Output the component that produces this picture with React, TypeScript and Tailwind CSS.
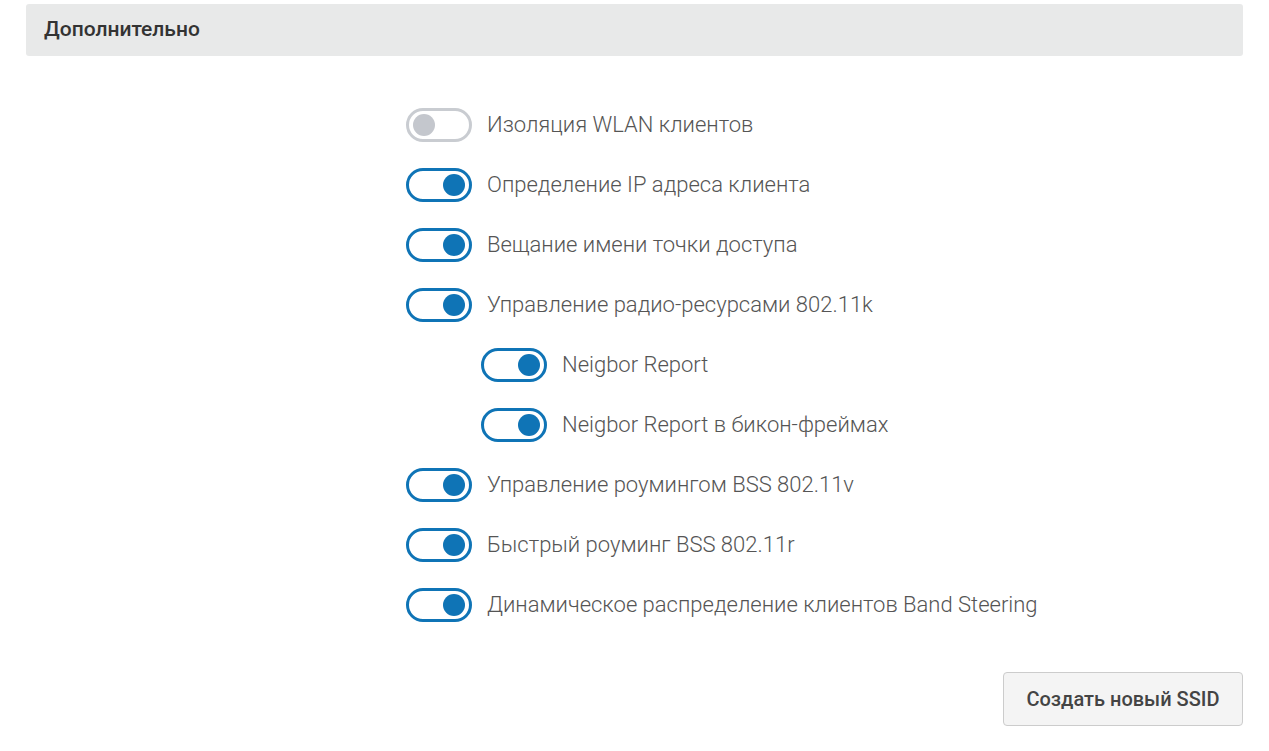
import React, { useState } from 'react';

type Option = {
  id: string;
  label: string;
  nested?: boolean;
  on: boolean;
};

const initialOptions: Option[] = [
  { id: 'isolation', label: 'Изоляция WLAN клиентов', on: false },
  { id: 'ip', label: 'Определение IP адреса клиента', on: true },
  { id: 'broadcast', label: 'Вещание имени точки доступа', on: true },
  { id: 'rrm', label: 'Управление радио-ресурсами 802.11k', on: true },
  { id: 'neighbor', label: 'Neigbor Report', nested: true, on: true },
  { id: 'beacon', label: 'Neigbor Report в бикон-фреймах', nested: true, on: true },
  { id: 'bss', label: 'Управление роумингом BSS 802.11v', on: true },
  { id: 'fast', label: 'Быстрый роуминг BSS 802.11r', on: true },
  { id: 'band', label: 'Динамическое распределение клиентов Band Steering', on: true },
];

const Toggle: React.FC<{ on: boolean; onClick: () => void }> = ({ on, onClick }) => (
  <button
    onClick={onClick}
    className={`flex items-center w-[66px] h-[34px] rounded-full border-[3px] px-[4px] bg-white shrink-0 ${
      on ? 'border-[#0f74b6] justify-end' : 'border-[#c9ccd1] justify-start'
    }`}
  >
    <span className={`block w-[22px] h-[22px] rounded-full ${on ? 'bg-[#0f74b6]' : 'bg-[#c4c7cd]'}`} />
  </button>
);

const App: React.FC = () => {
  const [options, setOptions] = useState(initialOptions);

  const toggle = (id: string) => {
    setOptions((prev) => prev.map((o) => (o.id === id ? { ...o, on: !o.on } : o)));
  };

  return (
    <div className="min-h-screen bg-white font-['Roboto',sans-serif] pt-[4px] px-[26px]">
      {/* Section header */}
      <div className="h-[52px] bg-[#e8e9e9] rounded-[3px] flex items-center px-[18px]">
        <h2 className="text-[21px] font-medium text-[#333]">Дополнительно</h2>
      </div>

      {/* Options */}
      <div className="flex flex-col gap-[26px] pt-[52px] pl-[380px]">
        {options.map((o) => (
          <div key={o.id} className={`flex items-center gap-[15px] ${o.nested ? 'pl-[75px]' : ''}`}>
            <Toggle on={o.on} onClick={() => toggle(o.id)} />
            <span className="text-[22px] font-light text-[#555] leading-[34px]">{o.label}</span>
          </div>
        ))}
      </div>

      {/* Footer */}
      <div className="flex justify-end pt-[50px]">
        <button className="w-[240px] h-[54px] bg-[#f4f4f4] border border-[#ccc] rounded-[4px] text-[20px] font-medium text-[#444]">
          Создать новый SSID
        </button>
      </div>
    </div>
  );
};

export default App;
